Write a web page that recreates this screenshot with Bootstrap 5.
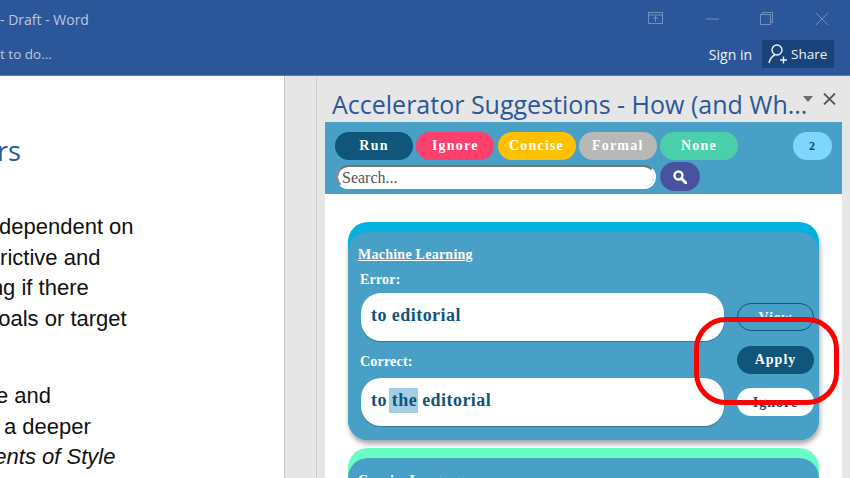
<!DOCTYPE html>
<html lang="en">
<head>
<meta charset="utf-8">
<title>Accelerator Suggestions</title>
<link href="https://cdn.jsdelivr.net/npm/bootstrap@5.3.0/dist/css/bootstrap.min.css" rel="stylesheet">
<style>
html,body{width:850px;height:478px;overflow:hidden;margin:0;background:#e6e6e6}
.wd-top{height:76px;background:#2b579a;border-bottom:1px solid #5a7eb4;font-family:"Open Sans",sans-serif;color:#b9c8df}
.wd-row1{height:37px}
.wd-row2{height:38px}
.wd-title{font-size:14px;line-height:1;padding-top:2px}
.wd-tell{font-size:13.5px;line-height:1;margin-top:11px}
.wd-ctrls{width:181px;margin-right:21px}
.wd-ctrls svg{display:block}
.wd-sign{font-size:14px;color:#eef2f8;margin-right:10px}
.wd-acct{height:28px;margin-top:3px}
.wd-share{width:72px;height:28px;background:#1a4379;color:#eef2f8;font-size:13.5px;margin-right:16px;gap:3px;padding-left:6px}
.wd-main{height:402px}
.wd-doc{background:#fff;overflow:hidden;border-right:1px solid #c6c6c6;font-family:"Liberation Sans",sans-serif;font-size:22px;line-height:30.5px;color:#111;flex:none;padding-top:137px;width:285px;white-space:nowrap}
.wd-head{font-family:"Open Sans",sans-serif;font-size:27px;color:#2b579a;line-height:34px;margin-left:-3px;margin-top:-79px;margin-bottom:44px}
.l1{margin-left:-1px}.l2{margin-left:-17px}.l3{margin-left:-14px}.l4{margin-left:-14px}.l5{margin-left:-4px;margin-top:47px}.l6{margin-left:4px}.l7{margin-left:-24px}
.wd-gutter{width:32px;flex:none;border-right:1px solid #d0d0d0}
.wd-pane{width:533px;flex:none;padding-left:8px;position:relative}
.pn-head{height:46px;font-family:"Open Sans",sans-serif;font-size:25px;color:#2b579a;line-height:34px;padding:11px 0 0 7px;white-space:nowrap}
.pn-tools{width:517px;height:72px;background:#48a0c7;padding:10px 10px 0 10px;font-family:"Liberation Serif",serif}
.pn-pill{height:28px;width:78px;border:0;padding:0;font-size:14px;font-weight:700;letter-spacing:1.2px;color:#fff;line-height:26px}
.pn-pill:hover{color:#fff}
.pn-gap{gap:3.25px}
.c-run{background:#0f567a}.c-ign{background:#ff3f6c}.c-con{background:#ffc000}.c-for{background:#b8b8b8}.c-non{background:#4bcfab}
.pn-count{width:39px;height:28px;background:#7ed6ff;color:#0f4a6b;font-size:12px;font-weight:700;line-height:28px;text-align:center;padding-right:1px}
.pn-search{width:320px;height:24px;margin:5px 4px 0 1px;padding:1px 0 0 4px;font-family:"Liberation Serif",serif;font-size:16px;color:#555;border:2px solid #fff;border-top-color:#757575;border-left-color:#8a8a8a;box-shadow:none;min-height:0}
.pn-search::placeholder{color:#555;opacity:1}
.pn-find{width:40px;height:29px;background:#48539f;border:0;padding:0;margin-top:2px}
.pn-body{width:517px;height:284px;background:#fff;padding:28px 23px 0 23px;font-family:"Liberation Serif",serif;color:#fff;overflow:hidden}
.sg-card{width:471px;border-radius:20px;padding-top:10px;margin-bottom:8px}
.sg-cyan{background:#00b0de;box-shadow:1px 4px 5px rgba(0,0,0,.35)}
.sg-mint{background:#66ffc2}
.sg-in{background:#48a0c7;border-radius:20px;height:208px;padding:14px 5px 0 10px}
.sg-name{font-size:14px;font-weight:700;text-decoration:underline;line-height:18px;letter-spacing:.25px;display:block;color:#fff}
.sg-lab{font-size:14px;font-weight:700;line-height:16px;margin:8px 0 5px 2px;letter-spacing:.2px}
.sg-lab2{margin-top:13px;margin-bottom:8px}
.sg-box{width:363px;height:48px;background:#fff;border-radius:20px;margin-left:3px;padding-left:10px;font-size:18px;font-weight:700;color:#0f567a;line-height:44px;letter-spacing:.45px;box-shadow:0 1px 1px rgba(0,0,0,.25)}
.sg-mk{background:#a5cde3;padding:2px 1px 3px 3px;margin-left:-3px;margin-right:-1px}
.sg-acts{width:77px;margin-left:13px;padding-top:57px;gap:14.5px}
.sg-btn{height:28px;width:77px;padding:0;font-size:14px;font-weight:700;letter-spacing:1px;line-height:27px;font-family:"Liberation Serif",serif}
.b-view{background:transparent;border:1px solid #0f567a;color:#fff}
.b-apply{background:#0f567a;border:0;color:#fff}
.b-ign{background:#fff;border:0;color:#0f4a7a}
.sg-rows{flex:none}
.ring{position:absolute;left:377px;top:241px;width:145px;height:88px;border:5px solid #f00;border-radius:32px;pointer-events:none}
.sg-peek{font-size:14px;font-weight:700;line-height:18px;letter-spacing:.2px}
.pn-cl{position:absolute}
.pn-caret{left:486px;top:20px}
.pn-x{left:506px;top:17px}
</style>
</head>
<body>
<header class="wd-top d-flex flex-column">
  <div class="wd-row1 d-flex justify-content-between align-items-center">
    <div class="wd-title">- Draft - Word</div>
    <div class="wd-ctrls d-flex justify-content-between align-items-center">
      <svg width="16" height="13" viewBox="0 0 16 13" fill="none" stroke="#6f8fbd"><rect x=".5" y=".5" width="14" height="11"/><path d="M.5 3h14M7.5 10V4.5M5 7l2.5-2.5L10 7"/></svg>
      <svg width="13" height="2" viewBox="0 0 13 2" stroke="#6f8fbd"><path d="M0 1h13"/></svg>
      <svg width="13" height="13" viewBox="0 0 13 13" fill="none" stroke="#6f8fbd"><rect x=".5" y="2.5" width="10" height="10"/><path d="M2.5 2.5v-2h10v10h-2"/></svg>
      <svg width="14" height="14" viewBox="0 0 14 14" stroke="#6f8fbd"><path d="M1 1l12 12M13 1L1 13"/></svg>
    </div>
  </div>
  <div class="wd-row2 d-flex justify-content-between">
    <div class="wd-tell">t to do...</div>
    <div class="wd-acct d-flex align-items-center">
      <span class="wd-sign">Sign in</span>
      <div class="wd-share d-flex align-items-center">
        <svg width="20" height="22" viewBox="0 0 20 22" fill="none" stroke="#eef2f8" stroke-width="1.4"><circle cx="9" cy="7" r="5"/><path d="M1 20c1-4 3-7 6-8M12 17h7M15.5 13.5v7"/></svg>
        <span>Share</span>
      </div>
    </div>
  </div>
</header>
<main class="wd-main d-flex">
  <section class="wd-doc">
    <div class="wd-head">rs</div>
    <div class="l1">dependent on</div>
    <div class="l2">strictive and</div>
    <div class="l3">ing if there</div>
    <div class="l4">goals or target</div>
    <div class="l5">e and</div>
    <div class="l6">a deeper</div>
    <div class="l7 fst-italic">ments of Style</div>
  </section>
  <div class="wd-gutter"></div>
  <section class="wd-pane">
    <div class="pn-head">Accelerator Suggestions - How (and Wh...</div>
    <svg class="pn-cl pn-caret" width="10" height="6" viewBox="0 0 10 6" fill="#6b6b6b"><path d="M0 0h10L5 6z"/></svg>
    <svg class="pn-cl pn-x" width="13" height="12" viewBox="0 0 13 12" stroke="#555" stroke-width="1.8"><path d="M1 .5l11 11M12 .5L1 11.500"/></svg>
    <div class="pn-tools">
      <div class="d-flex pn-gap">
        <button class="btn rounded-pill pn-pill c-run">Run</button>
        <button class="btn rounded-pill pn-pill c-ign">Ignore</button>
        <button class="btn rounded-pill pn-pill c-con">Concise</button>
        <button class="btn rounded-pill pn-pill c-for">Formal</button>
        <button class="btn rounded-pill pn-pill c-non">None</button>
        <span class="rounded-pill pn-count ms-auto">2</span>
      </div>
      <div class="d-flex align-items-start">
        <input class="form-control rounded-pill pn-search" placeholder="Search..." aria-label="Search">
        <button class="btn rounded-pill pn-find d-flex align-items-center justify-content-center" aria-label="Search">
          <svg width="14" height="14" viewBox="0 0 14 14" fill="none" stroke="#fff"><circle cx="5.500" cy="5.500" r="4" stroke-width="2.400"/><path d="M8.500 8.500L13 13" stroke-width="3" stroke-linecap="round"/></svg>
        </button>
      </div>
    </div>
    <div class="pn-body">
      <article class="sg-card sg-cyan">
        <div class="sg-in d-flex">
          <div class="sg-rows">
            <a class="sg-name" href="#">Machine Learning</a>
            <div class="sg-lab">Error:</div>
            <div class="sg-box">to editorial</div>
            <div class="sg-lab sg-lab2">Correct:</div>
            <div class="sg-box">to <span class="sg-mk">the</span> editorial</div>
          </div>
          <div class="sg-acts d-flex flex-column">
            <button class="btn rounded-pill sg-btn b-view">View</button>
            <button class="btn rounded-pill sg-btn b-apply">Apply</button>
            <button class="btn rounded-pill sg-btn b-ign">Ignore</button>
          </div>
        </div>
      </article>
      <article class="sg-card sg-mint">
        <div class="sg-in"><div class="sg-peek">Concise Language</div></div>
      </article>
    </div>
    <div class="ring"></div>
  </section>
</main>
<script src="https://cdn.jsdelivr.net/npm/bootstrap@5.3.0/dist/js/bootstrap.bundle.min.js"></script>
</body>
</html>
